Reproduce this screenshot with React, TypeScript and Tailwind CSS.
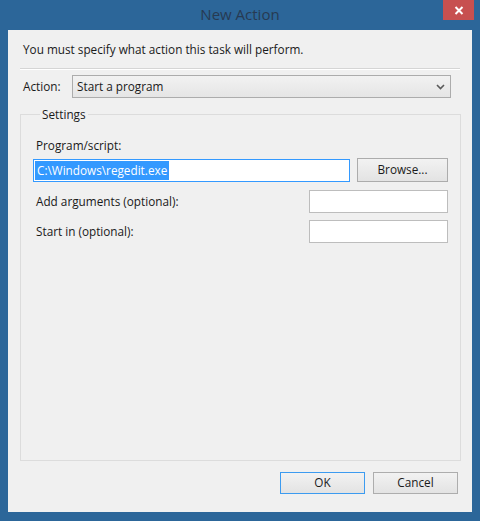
import React from "react";

const font = { fontFamily: '"Open Sans", "Noto Sans", Arial, sans-serif' };

function Chevron() {
  return (
    <svg width="9" height="6" viewBox="0 0 9 6" className="block">
      <path d="M1 1 L4.5 4.5 L8 1" fill="none" stroke="#5a5a5a" strokeWidth="1.6" />
    </svg>
  );
}

function CloseGlyph() {
  return (
    <svg width="10" height="9" viewBox="0 0 10 9" className="block">
      <path d="M1.5 1 L8.5 8 M8.5 1 L1.5 8" fill="none" stroke="#ffffff" strokeWidth="2" />
    </svg>
  );
}

function Button({ label, isDefault }: { label: string; isDefault?: boolean }) {
  return (
    <button
      className={
        "w-[85px] h-[22px] flex items-center justify-center text-[11.75px] text-[#1a1a1a] border bg-gradient-to-b from-[#f2f2f2] to-[#e3e3e3] " +
        (isDefault ? "border-[#3c9bf0]" : "border-[#adadad]")
      }
    >
      {label}
    </button>
  );
}

export default function App() {
  return (
    <div
      className="w-[480px] h-[521px] bg-[#2c6699] flex flex-col select-none"
      style={font}
    >
      {/* caption bar */}
      <div className="h-[30px] relative flex items-center justify-center">
        <span className="text-[15px] text-[#273a52] leading-none -mt-[2px]">New Action</span>
        <div className="absolute top-0 right-[6px] w-[31px] h-[20px] bg-[#c75050] flex items-center justify-center">
          <CloseGlyph />
        </div>
      </div>

      {/* client area */}
      <div className="mx-[8px] mb-[9px] flex-1 bg-[#f0f0f0] flex flex-col pl-[12px] pr-[11px] text-[11.75px] text-[#1a1a1a]">
        <div className="h-[38px] flex items-center pl-[3px] pt-[2px]">
          You must specify what action this task will perform.
        </div>
        <div className="h-[1px] bg-[#d5d5d5] mr-[1px]" />
        <div className="h-[1px] bg-white mr-[1px]" />

        <div className="mt-[5px] flex items-center">
          <span className="w-[52px] pl-[3px]">Action:</span>
          <div className="w-[379px] h-[23px] border border-[#acacac] bg-gradient-to-b from-[#f2f2f2] to-[#e5e5e5] flex items-center pl-[4px] pr-[5px]">
            <span className="flex-1">Start a program</span>
            <Chevron />
          </div>
        </div>

        <fieldset className="mt-[8px] flex-1 border border-[#dcdcdc] pl-[12px] pr-[12px] pb-[10px]">
          <legend className="ml-[7px] px-[2px] leading-[16px]">Settings</legend>
          <div className="pl-[3px] mt-[15px] leading-[16px]">Program/script:</div>
          <div className="mt-[5px] flex items-center gap-[7px]">
            <div className="w-[317px] h-[23px] border border-[#3399ff] bg-white flex items-center pl-[1px]">
              <span className="bg-[#3399ff] text-white leading-[19px] px-[2px]">C:\Windows\regedit.exe</span>
            </div>
            <button className="w-[91px] h-[24px] border border-[#acacac] bg-gradient-to-b from-[#f2f2f2] to-[#e3e3e3] flex items-center justify-center">
              Browse...
            </button>
          </div>
          <div className="mt-[8px] flex items-center justify-between">
            <span className="pl-[3px]">Add arguments (optional):</span>
            <div className="w-[139px] h-[23px] border border-[#bdbdbd] bg-white" />
          </div>
          <div className="mt-[7px] flex items-center justify-between">
            <span className="pl-[3px]">Start in (optional):</span>
            <div className="w-[139px] h-[23px] border border-[#bdbdbd] bg-white" />
          </div>
        </fieldset>

        <div className="mt-[11px] mb-[18px] flex justify-end gap-[8px] pr-[3px]">
          <Button label="OK" isDefault />
          <Button label="Cancel" />
        </div>
      </div>
    </div>
  );
}
